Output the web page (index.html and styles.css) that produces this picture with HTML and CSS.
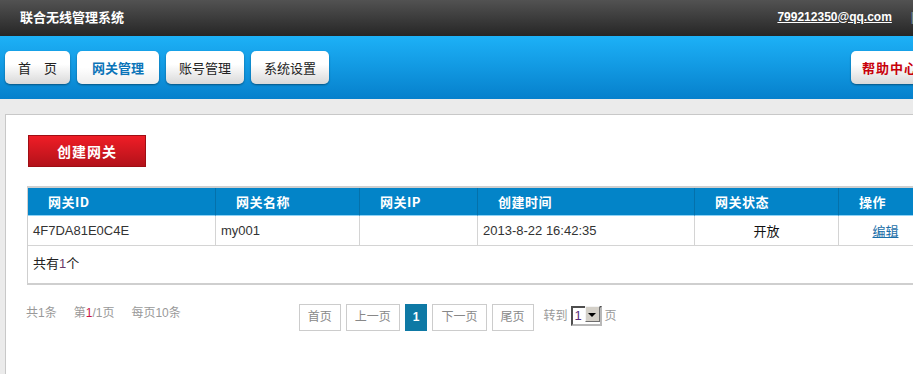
FILE: index.html
```html
<!DOCTYPE html>
<html lang="zh-CN">
<head>
    <meta charset="UTF-8">
    <meta name="viewport" content="width=device-width, initial-scale=1.0">
    <title>联合无线管理系统</title>
    <link rel="stylesheet" href="styles.css">
</head>
<body>
    <div class="page">
        <div class="topbar">
            <span class="site-name">联合无线管理系统</span>
            <div class="user">
                <a href="#" class="email">799212350@qq.com</a>
                <span class="sep">|</span>
                <a href="#" class="logout">退出</a>
            </div>
        </div>

        <div class="navbar">
            <a href="#" class="nav-btn">首　页</a>
            <a href="#" class="nav-btn active">网关管理</a>
            <a href="#" class="nav-btn">账号管理</a>
            <a href="#" class="nav-btn">系统设置</a>
            <a href="#" class="nav-btn help">帮助中心</a>
        </div>

        <div class="main">
            <div class="panel">
                <button class="create-btn">创建网关</button>

                <table class="grid">
                    <colgroup>
                        <col style="width:188px">
                        <col style="width:144px">
                        <col style="width:118px">
                        <col style="width:217px">
                        <col style="width:144px">
                        <col>
                    </colgroup>
                    <thead>
                        <tr>
                            <th>网关ID</th>
                            <th>网关名称</th>
                            <th>网关IP</th>
                            <th>创建时间</th>
                            <th>网关状态</th>
                            <th>操作</th>
                        </tr>
                    </thead>
                    <tbody>
                        <tr>
                            <td>4F7DA81E0C4E</td>
                            <td>my001</td>
                            <td></td>
                            <td>2013-8-22 16:42:35</td>
                            <td class="center dark">开放</td>
                            <td class="center"><a href="#" class="edit">编辑</a></td>
                        </tr>
                        <tr class="total">
                            <td colspan="6">共有<span class="num">1</span>个</td>
                        </tr>
                    </tbody>
                </table>

                <div class="pager-bar">
                    <div class="info">
                        <span>共1条</span>
                        <span>第<em>1</em>/1页</span>
                        <span>每页10条</span>
                    </div>
                    <div class="pager">
                        <a href="#" class="pg">首页</a>
                        <a href="#" class="pg">上一页</a>
                        <a href="#" class="pg current">1</a>
                        <a href="#" class="pg">下一页</a>
                        <a href="#" class="pg">尾页</a>
                        <div class="goto">
                            <span>转到</span>
                            <span class="jump">
                                <select class="jump-select">
                                    <option>1</option>
                                </select>
                            </span>
                            <span>页</span>
                        </div>
                    </div>
                </div>
            </div>
        </div>
    </div>
</body>
</html>
```

FILE: styles.css
```css
body {
    margin: 0;
    font-family: "Liberation Sans", "Noto Sans CJK SC", sans-serif;
    font-size: 12px;
    background-color: #ebebeb;
    overflow: hidden;
}

.page {
    width: 960px;
}

/* top bar */
.topbar {
    height: 36px;
    box-sizing: border-box;
    display: flex;
    align-items: center;
    padding: 0 14px 3px 20px;
    background: linear-gradient(#525252, #262626);
    color: #fff;
}

.site-name {
    font-family: "Noto Sans CJK SC", sans-serif;
    font-size: 13px;
    font-weight: bold;
}

.user {
    margin-left: auto;
    display: flex;
    align-items: center;
}

.email {
    color: #fff;
    font-weight: bold;
    font-size: 12px;
}

.sep {
    color: #7d9db3;
    margin: 0 8px 0 19px;
}

.logout {
    color: #fff;
    text-decoration: none;
}

/* nav */
.navbar {
    height: 63px;
    box-sizing: border-box;
    display: flex;
    align-items: flex-start;
    gap: 7px;
    padding: 15px 0 0 5px;
    background: linear-gradient(#1db1f7, #0680cc);
}

.nav-btn {
    height: 33px;
    line-height: 33px;
    padding: 0 13px;
    border-radius: 5px;
    background: linear-gradient(#ffffff 40%, #d9d9d9);
    box-shadow: 0 1px 2px rgba(0,0,0,0.4);
    color: #222;
    font-family: "Noto Sans CJK SC", sans-serif;
    font-size: 13px;
    text-decoration: none;
}

.nav-btn.active {
    padding: 0 15px;
    color: #0b74b8;
    font-weight: bold;
    background: linear-gradient(#ffffff 50%, #ededed);
}

.nav-btn.help {
    margin-left: auto;
    margin-right: 31px;
    padding: 0 11px;
    color: #c8000a;
    font-weight: bold;
    letter-spacing: 1px;
}

/* content */
.main {
    padding: 15px 5px 0 5px;
}

.panel {
    background-color: #fff;
    border: 1px solid #c8c8c8;
    padding: 20px 21px 60px;
}

.create-btn {
    display: block;
    width: 118px;
    height: 32px;
    margin-left: 1px;
    border: 1px solid #9e0e14;
    background: linear-gradient(#ef1d26, #b3121a);
    color: #fff;
    font-family: "Noto Sans CJK SC", sans-serif;
    font-size: 14px;
    font-weight: bold;
    letter-spacing: 1px;
    cursor: pointer;
}

.grid {
    width: 100%;
    margin-top: 19px;
    table-layout: fixed;
    border-collapse: separate;
    border-spacing: 0;
    border-top: 2px solid #cfcfcf;
    border-left: 1px solid #cfcfcf;
    border-bottom: 2px solid #cfcfcf;
}

.grid th {
    height: 28px;
    box-sizing: border-box;
    padding: 0 0 0 20px;
    background-color: #0384c8;
    border-right: 1px solid #0471ab;
    border-bottom: 1px solid #8fd3f6;
    color: #fff;
    text-align: left;
    font-family: "Noto Sans CJK SC", sans-serif;
    font-size: 13px;
    font-weight: bold;
    letter-spacing: 0.5px;
}

.grid td {
    height: 30px;
    box-sizing: border-box;
    padding: 0 5px;
    border-right: 1px solid #d4d4d4;
    border-bottom: 1px solid #d4d4d4;
    color: #333;
    font-size: 13px;
}

.grid td.center {
    text-align: center;
}

.grid td.dark {
    color: #111;
}

.edit {
    color: #1a6ea8;
}

.grid tr.total td {
    height: 37px;
    padding-top: 7px;
    vertical-align: top;
    border: none;
    color: #222;
}

.total .num {
    color: #6a3a6a;
}

/* paging */
.pager-bar {
    display: flex;
    align-items: flex-start;
    margin-top: 19px;
}

.info {
    display: flex;
    gap: 17px;
    margin-left: -1px;
    line-height: 18px;
    color: #999;
}

.info em {
    font-style: normal;
    color: #c8174a;
}

.pager {
    display: flex;
    align-items: flex-start;
    gap: 5px;
    margin-left: 118px;
}

.pg {
    height: 27px;
    box-sizing: border-box;
    line-height: 25px;
    padding: 0 8px;
    border: 1px solid #cccccc;
    color: #888;
    text-decoration: none;
}

.pg.current {
    padding: 0 7px;
    background-color: #0e79a5;
    border-color: #0e79a5;
    color: #fff;
    font-weight: bold;
}

.goto {
    display: flex;
    align-items: flex-start;
    gap: 3px;
    margin-left: 5px;
    line-height: 25px;
    color: #999;
}

.jump {
    position: relative;
    height: 20px;
}

.jump-select {
    appearance: none;
    -webkit-appearance: none;
    width: 31px;
    height: 20px;
    box-sizing: border-box;
    margin: 0;
    padding: 0 0 0 2px;
    border: 2px solid;
    border-color: #4e4e4e #b8b8b8 #b8b8b8 #4e4e4e;
    border-radius: 0;
    background: #fff;
    color: #5a2a7a;
    font-family: "Liberation Sans", sans-serif;
    font-size: 13px;
    line-height: 16px;
}

.jump::after {
    content: "";
    position: absolute;
    top: 2px;
    right: 2px;
    width: 13px;
    height: 14px;
    background-color: #d4d0c8;
    border: 1px solid;
    border-color: #f4f4f4 #6e6e6e #6e6e6e #f4f4f4;
    pointer-events: none;
}

.jump::before {
    content: "";
    position: absolute;
    top: 9px;
    right: 6px;
    border-left: 4px solid transparent;
    border-right: 4px solid transparent;
    border-top: 4px solid #000;
    z-index: 1;
    pointer-events: none;
}
```
